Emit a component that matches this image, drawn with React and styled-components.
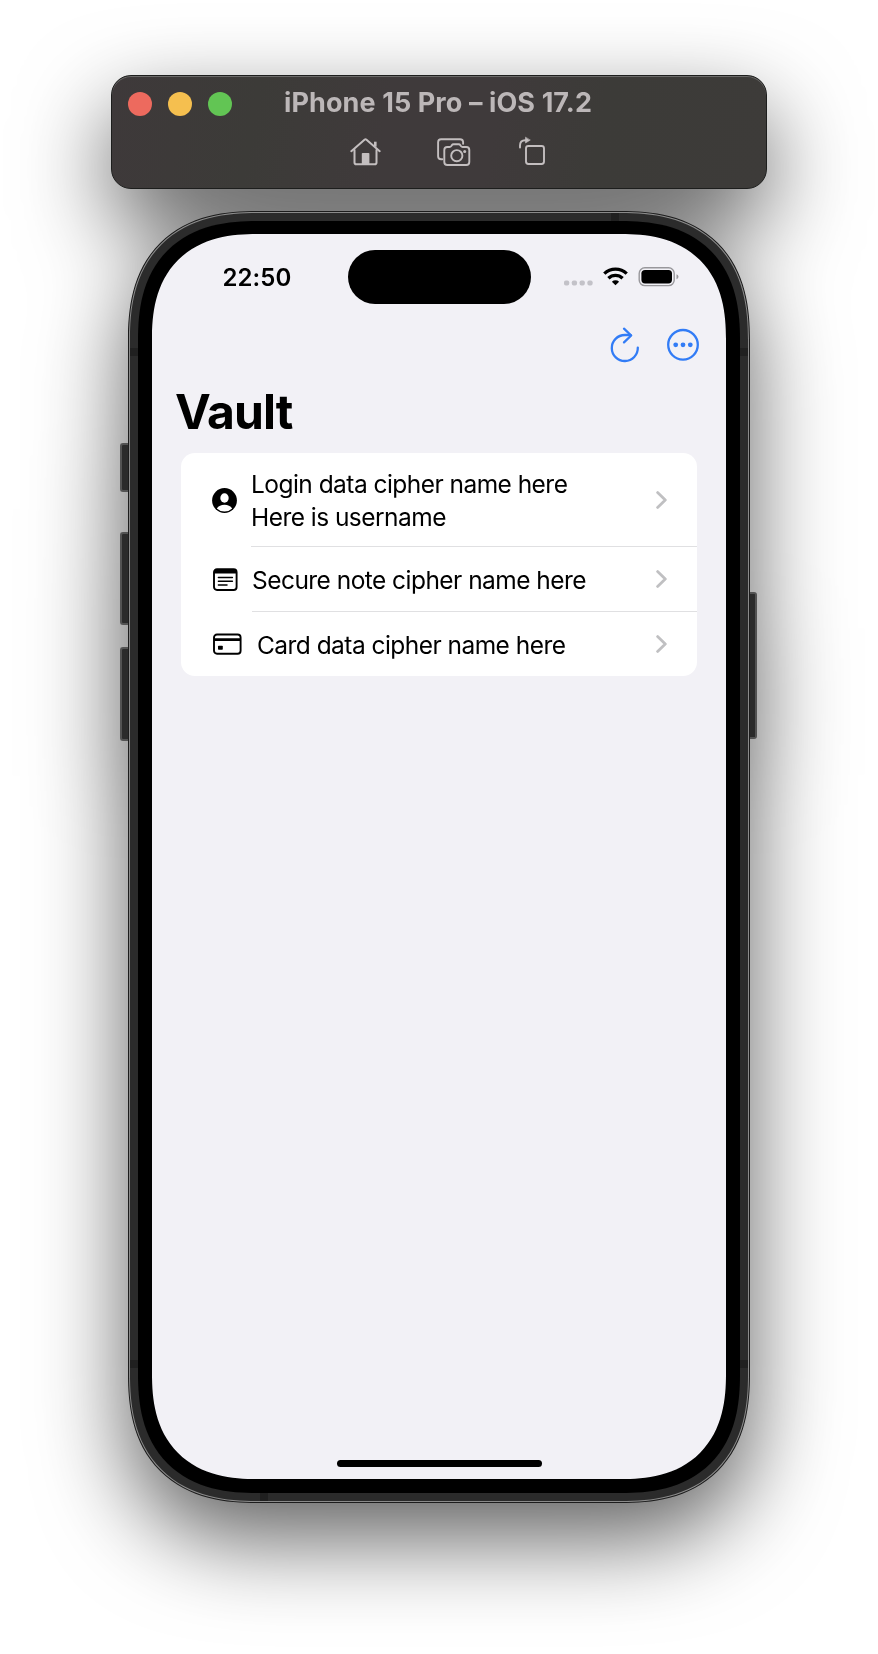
import React from 'react';
import styled, { createGlobalStyle, css } from 'styled-components';

const GlobalStyle = createGlobalStyle`
  * { box-sizing: border-box; }
  html, body { margin: 0; padding: 0; background: #fff; }
  body { font-family: Inter, "Liberation Sans", sans-serif; color: #000; }
  svg { display: block; flex: none; }
`;

/* Continuous corners, with a circular fallback. */
const smoothCorner = (round, smooth) => css`
  border-radius: ${round}px;
  @supports (corner-shape: superellipse(1.28)) {
    border-radius: ${smooth}px;
    corner-shape: superellipse(1.28);
  }
`;

const Desktop = styled.main`
  width: 878px;
  height: 1654px;
  padding-top: 75px;
  overflow: hidden;
  background: #fff;
`;

const Simulator = styled.div`
  display: flex;
  flex-direction: column;
  align-items: center;
  filter: drop-shadow(0 36px 45px rgba(0, 0, 0, 0.62));
`;

const ToolWindow = styled.header`
  width: 656px;
  height: 114px;
  flex: none;
  border-radius: 20px;
  border: 1px solid #1d1e1d;
  background: linear-gradient(100deg, #3e393a 0%, #3c3b38 22%, #3f3a3b 42%, #3f3a3b 58%, #3c3b38 74%, #3d3b39 100%);
  box-shadow: inset 0 1px 0 #6b6a69;
`;

const TitleRow = styled.div`
  display: grid;
  grid-template-columns: 156px 1fr;
  align-items: center;
  height: 38px;
  margin-top: 9px;
  padding-left: 16px;
`;

const Lights = styled.div`
  display: flex;
  gap: 16px;
`;

const Light = styled.span`
  width: 24px;
  height: 24px;
  border-radius: 50%;
  background: ${(p) => p.$color};
`;

const WindowTitle = styled.span`
  font-size: 27px;
  font-weight: 700;
  line-height: 36px;
  padding-bottom: 2px;
  letter-spacing: 0.1px;
  color: #bcb7b8;
  white-space: nowrap;
`;

const ToolRow = styled.div`
  display: flex;
  align-items: center;
  height: 34px;
  margin-top: 11px;
  padding-left: 237px;
`;

const ToolButton = styled.span`
  display: flex;
  width: ${(p) => p.$width}px;
  height: 34px;
  color: #c3bebf;
`;

const Phone = styled.section`
  position: relative;
  width: 622px;
  height: 1292px;
  flex: none;
  margin-top: 22px;
  ${smoothCorner(114, 129)}
  border: 1px solid #1c1c1c;
  background: #8a8a8a;
  padding: 1px;
`;

const Band = styled.div`
  height: 100%;
  ${smoothCorner(112, 127)}
  background: #2b2b2b;
  padding: 8px;
`;

const Bezel = styled.div`
  height: 100%;
  ${smoothCorner(104, 119)}
  background: #000;
  padding: 13px 14px 14px;
`;

const Screen = styled.div`
  height: 100%;
  ${smoothCorner(90, 105)}
  background: #f2f1f6;
  display: flex;
  flex-direction: column;
  overflow: hidden;
`;

const SideKey = styled.span`
  position: absolute;
  top: ${(p) => p.$top}px;
  ${(p) => p.$side}: ${(p) => (p.$side === 'left' ? -9 : -8)}px;
  width: ${(p) => (p.$side === 'left' ? 8 : 7)}px;
  height: ${(p) => p.$height}px;
  background: #2b2b2b;
  border: 2px solid #535353;
  border-${(p) => (p.$side === 'left' ? 'right' : 'left')}: 0;
  border-radius: ${(p) => (p.$side === 'left' ? '3px 0 0 3px' : '0 3px 3px 0')};
`;

const AntennaGap = styled.span`
  position: absolute;
  background: #202020;
  width: 8px;
  height: 8px;
  ${(p) => p.$edgeX}: ${(p) => p.$x}px;
  ${(p) => p.$edgeY}: ${(p) => p.$y}px;
`;

const StatusBar = styled.div`
  display: grid;
  grid-template-columns: 195.5px 183px 1fr;
  height: 70px;
  padding-top: 16px;
`;

const Clock = styled.time`
  padding-left: 70.6px;
  font-size: 24px;
  font-weight: 600;
  line-height: 55px;
  letter-spacing: 0.05px;
`;

const Island = styled.div`
  height: 54px;
  border-radius: 27px;
  background: #000;
`;

const StatusIcons = styled.div`
  display: flex;
  height: 54px;
  padding-left: 33px;
`;

const NavBar = styled.nav`
  display: flex;
  justify-content: flex-end;
  gap: 27px;
  height: 40px;
  margin-top: 22px;
  padding-right: 27px;
  color: #327cf6;
`;

const PageTitle = styled.h1`
  margin: 16px 0 0 23px;
  height: 62px;
  font-size: 48px;
  font-weight: 700;
  line-height: 60px;
  letter-spacing: -0.9px;
`;

const List = styled.ul`
  list-style: none;
  margin: 9px 29px 0;
  padding: 0;
  border-radius: 14px;
  background: #fff;
  overflow: hidden;
`;

const Item = styled.li`
  display: flex;
  align-items: stretch;
  height: ${(p) => p.$height}px;
  padding-left: 31px;
`;

const ItemIcon = styled.span`
  display: flex;
  align-items: center;
  width: ${(p) => p.$width}px;
`;

const ItemBody = styled.div`
  flex: 1;
  display: flex;
  align-items: center;
  justify-content: space-between;
  padding-right: 30px;
  border-bottom: ${(p) => (p.$last ? '0' : '1px')} solid #e0e0e2;
`;

const Label = styled.span`
  padding-top: 2px;
  font-size: 24.5px;
  line-height: 32.6px;
  letter-spacing: -0.54px;
  white-space: nowrap;
`;

const Line = styled.span`
  display: block;
`;

const HomeIndicator = styled.div`
  width: 205px;
  height: 7px;
  margin: auto auto 12px;
  border-radius: 4px;
  background: #000;
`;

const Chevron = () => (
  <svg width="11" height="18" viewBox="0 0 11 18" fill="none" stroke="#c0c0c2" strokeWidth="2.8" strokeLinecap="round" strokeLinejoin="round">
    <path d="M1.6 1.6 9.3 9 1.6 16.4" />
  </svg>
);

const HomeIcon = () => (
  <svg width="32" height="34" viewBox="0 0 32 34" fill="none" stroke="currentColor" strokeWidth="2" strokeLinecap="round" strokeLinejoin="round">
    <path d="M2.3 17.2 15.5 5.7q1-.8 2 0l13.2 11.500" />
    <path d="M5.5 16v12.4q0 1.8 1.8 1.8h18.4q1.8 0 1.8-1.8V16" />
    <path d="M26.3 7.7v5" strokeWidth="2.6" strokeLinecap="butt" />
    <path d="M12.8 30V19.8q0-.8.8-.8h6q.8 0 .8.8V30z" fill="currentColor" stroke="none" />
  </svg>
);

const CamerasIcon = () => (
  <svg width="34" height="34" viewBox="0.7 0 34 34" fill="none" stroke="currentColor" strokeWidth="1.9" strokeLinecap="round" strokeLinejoin="round">
    <path d="M6 25.3H4.8q-3 0-3-3V8.3q0-3 3-3h19q2.6 0 3 2.5v2" />
    <path d="M8 28V16q0-3 3-3h2.3q1 0 1.7-1l.5-.8q.6-.9 1.7-.9h5.2q1.1 0 1.7.9l.5.8q.7 1 1.7 1H30q3 0 3 3v12q0 3-3 3H11q-3 0-3-3z" />
    <circle cx="20.5" cy="21.7" r="5.6" />
    <circle cx="28.4" cy="17.4" r="1.5" fill="currentColor" stroke="none" />
  </svg>
);

const RotateIcon = () => (
  <svg width="28" height="34" viewBox="0.5 0 28 34" fill="none" stroke="currentColor" strokeWidth="1.9" strokeLinecap="round" strokeLinejoin="round">
    <rect x="7.5" y="12" width="18" height="18" rx="2.4" />
    <path d="M1.5 13.5V11.5q0-5.3 5.3-5.300h.6" />
    <path d="M7 3.5v5.5l4.5-2.800z" fill="currentColor" strokeWidth="0.6" />
  </svg>
);

const StatusGlyphs = () => (
  <svg width="118" height="54" viewBox="0 0 118 54">
    <g fill="#c3c2c8">
      {[0, 7.8, 15.6, 23.4].map((x) => (
        <rect key={x} x={x} y="30.4" width="5.2" height="5.2" rx="1.8" />
      ))}
    </g>
    <g fill="none" stroke="#000" strokeWidth="3.3">
      <path d="M40.3 23.6a16.2 16.2 0 0 1 22.4 0" />
      <path d="M44.4 28.3a10.2 10.2 0 0 1 14.2 0" />
    </g>
    <path d="M51.5 35.3 47.9 31.7a5.2 5.2 0 0 1 7.2 0z" fill="#000" />
    <rect x="75.2" y="17.8" width="35" height="17.8" rx="5.6" fill="none" stroke="#98979b" strokeWidth="1.4" />
    <rect x="77.4" y="20" width="30.6" height="13.4" rx="3.6" fill="#000" />
    <path d="M112.5 24.2q2 .8 2 2.5t-2 2.5z" fill="#98979b" />
  </svg>
);

const RefreshIcon = () => (
  <svg width="30" height="40" viewBox="0 0 30 40" fill="none" stroke="currentColor" strokeWidth="2.3" strokeLinecap="round" strokeLinejoin="round">
    <path d="M27.8 21.6a13 13 0 1 1-13-12.6h5.800" />
    <path d="M14 2.7 21.2 9.5 14 16.4" />
  </svg>
);

const MoreIcon = () => (
  <svg width="32" height="40" viewBox="0 0 32 40" fill="none" stroke="currentColor" strokeWidth="2.3">
    <circle cx="16" cy="18.800" r="14.8" />
    <g fill="currentColor" stroke="none">
      <circle cx="8.700" cy="18.800" r="2.4" />
      <circle cx="16" cy="18.800" r="2.4" />
      <circle cx="23.300" cy="18.800" r="2.4" />
    </g>
  </svg>
);

const PersonIcon = () => (
  <svg width="25" height="25" viewBox="0 0 25 25">
    <circle cx="12.5" cy="12.5" r="12.4" />
    <ellipse cx="12.5" cy="10" rx="4.2" ry="4.7" fill="#fff" />
    <path d="M4.8 20.4q2.6-3.7 7.7-3.7t7.7 3.7a11.1 11.1 0 0 1-15.400 0z" fill="#fff" />
  </svg>
);

const NoteIcon = () => (
  <svg width="26" height="25" viewBox="0 0 26 25" fill="none" stroke="#000">
    <rect x="2" y="2.2" width="22.6" height="20.8" rx="3" strokeWidth="1.9" />
    <path d="M2 6.5V4.2q0-2 2-2h18.6q2 0 2 2v2.3z" fill="#000" stroke="none" />
    <path d="M6.4 10.6h14M6.4 14.3h14M6.4 18h8.6" strokeWidth="1.5" strokeLinecap="round" />
  </svg>
);

const CardIcon = () => (
  <svg width="30" height="23" viewBox="0 0 30 23" fill="none" stroke="#000">
    <rect x="2" y="1.5" width="26.6" height="19.2" rx="3" strokeWidth="1.9" />
    <path d="M2 6.7h26.6" strokeWidth="2.8" />
    <rect x="6" y="12.8" width="4.8" height="3.9" rx=".8" fill="#000" stroke="none" />
  </svg>
);

export default function App() {
  return (
    <>
      <GlobalStyle />
      <Desktop>
        <Simulator>
          <ToolWindow>
            <TitleRow>
              <Lights>
                <Light $color="#ed6a5e" />
                <Light $color="#f5bf4f" />
                <Light $color="#62c554" />
              </Lights>
              <WindowTitle>iPhone 15 Pro – iOS 17.2</WindowTitle>
            </TitleRow>
            <ToolRow>
              <ToolButton $width={88}><HomeIcon /></ToolButton>
              <ToolButton $width={82}><CamerasIcon /></ToolButton>
              <ToolButton $width={28}><RotateIcon /></ToolButton>
            </ToolRow>
          </ToolWindow>
          <Phone>
            <SideKey $side="left" $top={231} $height={49} />
            <SideKey $side="left" $top={320} $height={93} />
            <SideKey $side="left" $top={435} $height={94} />
            <SideKey $side="right" $top={380} $height={147} />
            <Band>
              <Bezel>
                <Screen>
                  <StatusBar>
                    <Clock>22:50</Clock>
                    <Island />
                    <StatusIcons><StatusGlyphs /></StatusIcons>
                  </StatusBar>
                  <NavBar>
                    <RefreshIcon />
                    <MoreIcon />
                  </NavBar>
                  <PageTitle>Vault</PageTitle>
                  <List>
                    <Item $height={94}>
                      <ItemIcon $width={39}><PersonIcon /></ItemIcon>
                      <ItemBody>
                        <Label>
                          <Line>Login data cipher name here</Line>
                          <Line>Here is username</Line>
                        </Label>
                        <Chevron />
                      </ItemBody>
                    </Item>
                    <Item $height={65}>
                      <ItemIcon $width={40}><NoteIcon /></ItemIcon>
                      <ItemBody>
                        <Label>Secure note cipher name here</Label>
                        <Chevron />
                      </ItemBody>
                    </Item>
                    <Item $height={64}>
                      <ItemIcon $width={45}><CardIcon /></ItemIcon>
                      <ItemBody $last>
                        <Label>Card data cipher name here</Label>
                        <Chevron />
                      </ItemBody>
                    </Item>
                  </List>
                  <HomeIndicator />
                </Screen>
              </Bezel>
            </Band>
            <AntennaGap $edgeX="right" $x={130} $edgeY="top" $y={1} />
            <AntennaGap $edgeX="left" $x={131} $edgeY="bottom" $y={1} />
            <AntennaGap $edgeX="left" $x={1} $edgeY="top" $y={136} />
            <AntennaGap $edgeX="right" $x={1} $edgeY="top" $y={136} />
            <AntennaGap $edgeX="left" $x={1} $edgeY="bottom" $y={134} />
            <AntennaGap $edgeX="right" $x={1} $edgeY="bottom" $y={134} />
          </Phone>
        </Simulator>
      </Desktop>
    </>
  );
}
